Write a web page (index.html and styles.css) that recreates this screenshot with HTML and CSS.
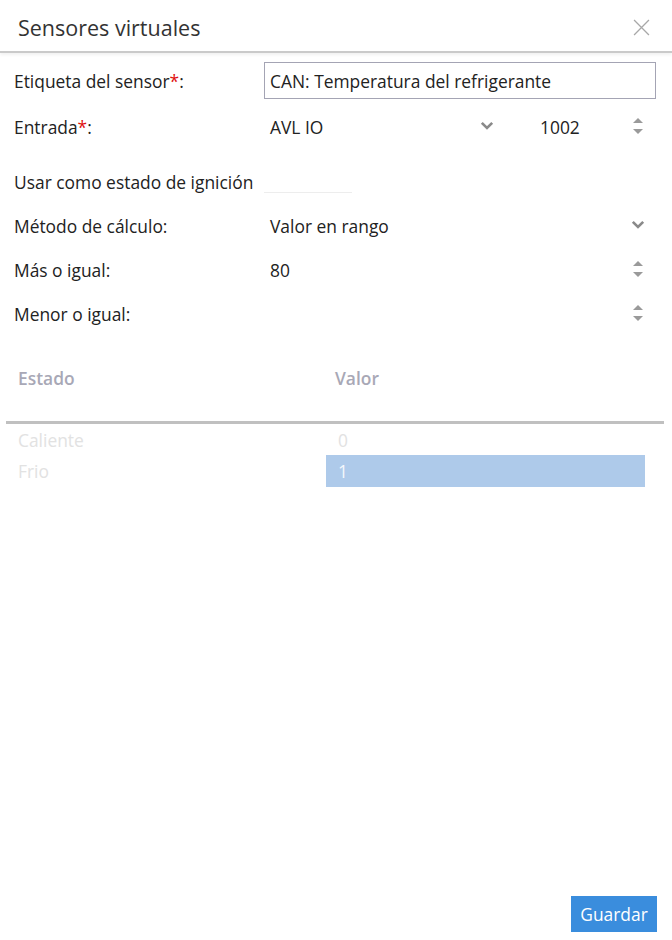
FILE: index.html
```html
<!DOCTYPE html>
<html lang="es">
<head>
    <meta charset="UTF-8">
    <meta name="viewport" content="width=device-width, initial-scale=1.0">
    <title>Sensores virtuales</title>
    <link rel="stylesheet" href="styles.css">
</head>
<body>
    <div class="dialog">
        <div class="dialog-header">
            <h1>Sensores virtuales</h1>
            <button class="close-btn" aria-label="Cerrar">
                <svg width="17" height="17" viewBox="0 0 16 16"><path d="M1 1 L15 15 M15 1 L1 15" stroke="#a8a8a8" stroke-width="1.2" fill="none"/></svg>
            </button>
        </div>

        <div class="form">
            <div class="row row-label-input">
                <label class="row-label">Etiqueta del sensor<span class="req">*</span>:</label>
                <div class="row-field">
                    <input type="text" class="text-input" value="CAN: Temperatura del refrigerante">
                </div>
            </div>

            <div class="row row-input">
                <label class="row-label">Entrada<span class="req">*</span>:</label>
                <div class="row-field split">
                    <div class="select select-short">
                        <span>AVL IO</span>
                        <svg class="chevron" width="14" height="9" viewBox="0 0 14 9"><path d="M1.8 1.8 L7 7 L12.2 1.8" stroke="#8a8a8a" stroke-width="2.6" fill="none"/></svg>
                    </div>
                    <div class="number number-short">
                        <span>1002</span>
                        <span class="spinner"><i class="up"></i><i class="down"></i></span>
                    </div>
                </div>
            </div>

            <div class="row row-ignition">
                <label class="row-label">Usar como estado de ignición</label>
                <div class="row-field">
                    <div class="toggle-line"></div>
                </div>
            </div>

            <div class="row">
                <label class="row-label">Método de cálculo:</label>
                <div class="row-field">
                    <div class="select">
                        <span>Valor en rango</span>
                        <svg class="chevron" width="14" height="9" viewBox="0 0 14 9"><path d="M1.8 1.8 L7 7 L12.2 1.8" stroke="#8a8a8a" stroke-width="2.6" fill="none"/></svg>
                    </div>
                </div>
            </div>

            <div class="row">
                <label class="row-label">Más o igual:</label>
                <div class="row-field">
                    <div class="number">
                        <span>80</span>
                        <span class="spinner"><i class="up"></i><i class="down"></i></span>
                    </div>
                </div>
            </div>

            <div class="row">
                <label class="row-label">Menor o igual:</label>
                <div class="row-field">
                    <div class="number">
                        <span></span>
                        <span class="spinner"><i class="up"></i><i class="down"></i></span>
                    </div>
                </div>
            </div>
        </div>

        <div class="states">
            <div class="states-head">
                <div class="cell">Estado</div>
                <div class="cell">Valor</div>
            </div>
            <div class="states-row first">
                <div class="cell">Caliente</div>
                <div class="cell">0</div>
            </div>
            <div class="states-row">
                <div class="cell">Frio</div>
                <div class="cell selected">1</div>
            </div>
        </div>

        <div class="dialog-footer">
            <button class="save-btn">Guardar</button>
        </div>
    </div>
</body>
</html>
```

FILE: styles.css
```css
* {
    margin: 0;
    padding: 0;
    box-sizing: border-box;
}

body {
    font-family: 'Open Sans', 'Noto Sans', sans-serif;
    background: #fff;
    color: #222;
    font-size: 17.4px;
}

.dialog {
    width: 672px;
    height: 940px;
    display: flex;
    flex-direction: column;
    background: #fff;
}

.dialog-header {
    height: 53px;
    display: flex;
    align-items: center;
    justify-content: space-between;
    padding: 3px 22px 0 18px;
    border-bottom: 2px solid #cacaca;
    box-shadow: 0 2px 3px rgba(0, 0, 0, 0.06);
}

.dialog-header h1 {
    font-size: 21.5px;
    font-weight: 400;
    color: #333;
}

.close-btn {
    background: none;
    border: none;
    display: flex;
}

.form {
    padding-top: 7px;
}

.row {
    height: 44px;
    display: flex;
    align-items: center;
}

.row-label-input {
    height: 41px;
}

.row-input {
    height: 52px;
}

.row-ignition {
    margin-top: 7px;
}

.row-label {
    width: 264px;
    padding-left: 14px;
    color: #222;
}

.req {
    color: #e01010;
}

.row-field {
    width: 392px;
    height: 100%;
    display: flex;
    align-items: center;
}

.text-input {
    width: 100%;
    height: 37px;
    border: 1px solid #a4a4b4;
    padding: 0 5px;
    font-family: inherit;
    font-size: 17.4px;
    color: #222;
    outline: none;
}

.split {
    justify-content: space-between;
}

.select,
.number {
    width: 100%;
    display: flex;
    align-items: center;
    justify-content: space-between;
    padding-left: 6px;
    padding-right: 11px;
}

.select .chevron {
    margin-top: -4px;
}

.select-short {
    width: 236px;
    padding-right: 6px;
}

.number-short {
    width: 122px;
}

.number,
.number-short {
    padding-right: 13px;
}

.spinner {
    display: flex;
    flex-direction: column;
    gap: 6px;
    margin-top: -2px;
}

.spinner i {
    display: block;
    width: 0;
    height: 0;
    border-left: 5px solid transparent;
    border-right: 5px solid transparent;
}

.spinner .up {
    border-bottom: 5px solid #9a9a9a;
}

.spinner .down {
    border-top: 5px solid #9a9a9a;
}

.toggle-line {
    width: 88px;
    height: 1px;
    background: #ededed;
    margin-top: 21px;
}

.states {
    margin: 0 8px 0 6px;
}

.states-head {
    display: flex;
    height: 88px;
    align-items: flex-start;
    padding-top: 30px;
    border-bottom: 3px solid #c0c0c0;
    color: #a8a8b6;
    font-weight: 600;
}

.states-head .cell:first-child {
    padding-left: 12px;
}

.states-head .cell:last-child {
    padding-left: 9px;
}

.states-row {
    display: flex;
    height: 32px;
    color: #e2e2e2;
}

.states-row.first {
    height: 31px;
}

.cell {
    width: 320px;
    display: flex;
    align-items: center;
}

.states-row .cell {
    padding-left: 12px;
}

.states-row .cell:last-child {
    width: 319px;
}

.cell.selected {
    background: #aecaea;
    color: #f4f8fc;
}

.dialog-footer {
    margin-top: auto;
    display: flex;
    justify-content: flex-end;
    padding: 0 15px 8px 0;
}

.save-btn {
    width: 86px;
    height: 36px;
    background: #3a8ddd;
    color: #fff;
    border: none;
    font-family: inherit;
    font-size: 17.4px;
}
```
